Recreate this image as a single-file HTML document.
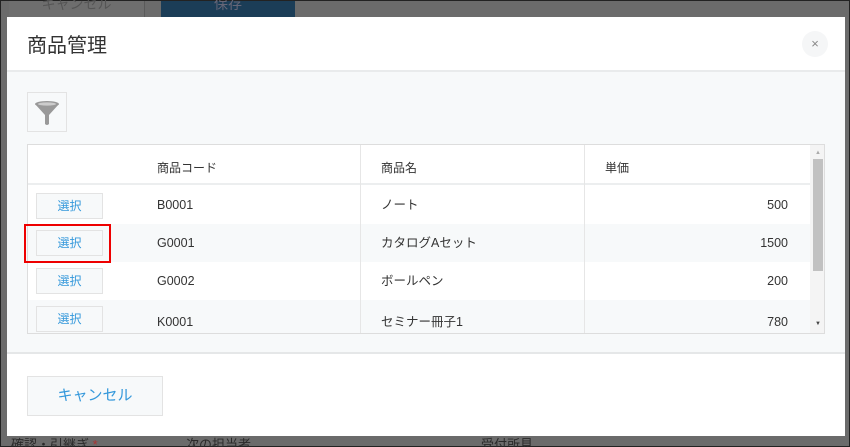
<!DOCTYPE html><html><head><meta charset="utf-8"><style>
*{box-sizing:border-box;margin:0;padding:0}
html,body{width:850px;height:447px;overflow:hidden}
body{background:#6b6b6b;position:relative;font-family:"Liberation Sans","Noto Sans CJK JP",sans-serif;font-size:12px;color:#333;border:1px solid #222}
.a{position:absolute}
.sel{position:absolute;left:8px;width:67px;height:26px;background:#f7f9fa;border:1px solid #e3e3e3;color:#3498db;text-align:center;line-height:24px;font-size:12px}
.row{position:absolute;left:0;width:782px;height:38px}
.row span{position:absolute;top:0;line-height:38px;font-size:12.5px}
</style></head><body>
<div class="a" style="left:8px;top:0;width:136px;height:16px;background:#6e6e6e;border-right:1px solid #5a5a5a;color:#555;font-size:14px;text-align:center;line-height:6px">キャンセル</div>
<div class="a" style="left:160px;top:0;width:134px;height:16px;background:#1b3d57;color:#667;font-size:14px;text-align:center;line-height:6px">保存</div>
<div class="a" style="left:0;top:432px;width:850px;height:15px;color:#2a2a2a;font-size:13px"><span class="a" style="left:10px;top:1px">確認・引継ぎ <span style="color:#a33">*</span></span><span class="a" style="left:185px;top:1px">次の担当者</span><span class="a" style="left:480px;top:1px">受付所見</span></div>
<div class="a" style="left:6px;top:16px;width:838px;height:419px;background:#fff">
 <div class="a" style="left:20px;top:12px;font-size:20px;color:#333">商品管理</div>
 <div class="a" style="left:795px;top:14px;width:26px;height:26px;border-radius:50%;background:#f5f6f7;color:#888;text-align:center;line-height:25px;font-size:13px">×</div>
 <div class="a" style="left:0;top:53px;width:838px;height:284px;background:#f7f9fa;border-top:2px solid #e9ebec;border-bottom:2px solid #e5e7e8"></div>
 <div class="a" style="left:20px;top:75px;width:40px;height:40px;border:1px solid #e3e3e3;background:#f7f9fa">
  <svg width="38" height="38" viewBox="0 0 38 38"><ellipse cx="19" cy="11" rx="12" ry="3" fill="#999"/><path d="M7 11 L17 22 L17 31 Q19 33 21 31 L21 22 L31 11Z" fill="#999"/><ellipse cx="19" cy="11" rx="9" ry="1.6" fill="#ccc"/></svg>
 </div>
 <div class="a" style="left:20px;top:127px;width:798px;height:190px;border:1px solid #ddd;background:#fff;overflow:hidden">
  <div class="a" style="left:0;top:0;width:782px;height:40px;border-bottom:2px solid #eceeef;background:#fff"><span class="a" style="left:129px;top:14px">商品コード</span><span class="a" style="left:353px;top:14px">商品名</span><span class="a" style="left:577px;top:14px">単価</span></div>
  <div class="row" style="top:41px;background:#fff"><div class="sel" style="top:7px">選択</div><span style="left:129px">B0001</span><span style="left:353px">ノート</span><span style="right:22px">500</span></div>
  <div class="row" style="top:79px;background:#f7f9fa"><div class="sel" style="top:6px">選択</div><span style="left:129px">G0001</span><span style="left:353px">カタログAセット</span><span style="right:22px">1500</span></div>
  <div class="row" style="top:117px;background:#fff"><div class="sel" style="top:6px">選択</div><span style="left:129px">G0002</span><span style="left:353px">ボールペン</span><span style="right:22px">200</span></div>
  <div class="row" style="top:155px;background:#f7f9fa"><div class="sel" style="top:6px">選択</div><span style="left:129px;top:3px">K0001</span><span style="left:353px;top:3px">セミナー冊子1</span><span style="right:22px;top:3px">780</span></div>
  <div class="a" style="left:332px;top:0;width:1px;height:190px;background:#e6e6e6"></div>
  <div class="a" style="left:556px;top:0;width:1px;height:190px;background:#e6e6e6"></div>
  <div class="a" style="left:782px;top:0;width:16px;height:190px;background:#f4f4f4"></div>
  <div class="a" style="left:785px;top:14px;width:10px;height:112px;background:#c1c1c1"></div>
  <div class="a" style="left:787px;top:5px;font-size:6px;color:#aaa">▲</div>
  <div class="a" style="left:787px;top:176px;font-size:6px;color:#444">▼</div>
 </div>
 <div class="a" style="left:17px;top:207px;width:87px;height:39px;border:2px solid #e00"></div>
 <div class="a" style="left:20px;top:359px;width:136px;height:40px;border:1px solid #e3e3e3;background:#f7f9fa;color:#3498db;font-size:15px;text-align:center;line-height:38px">キャンセル</div>
</div>
</body></html>
